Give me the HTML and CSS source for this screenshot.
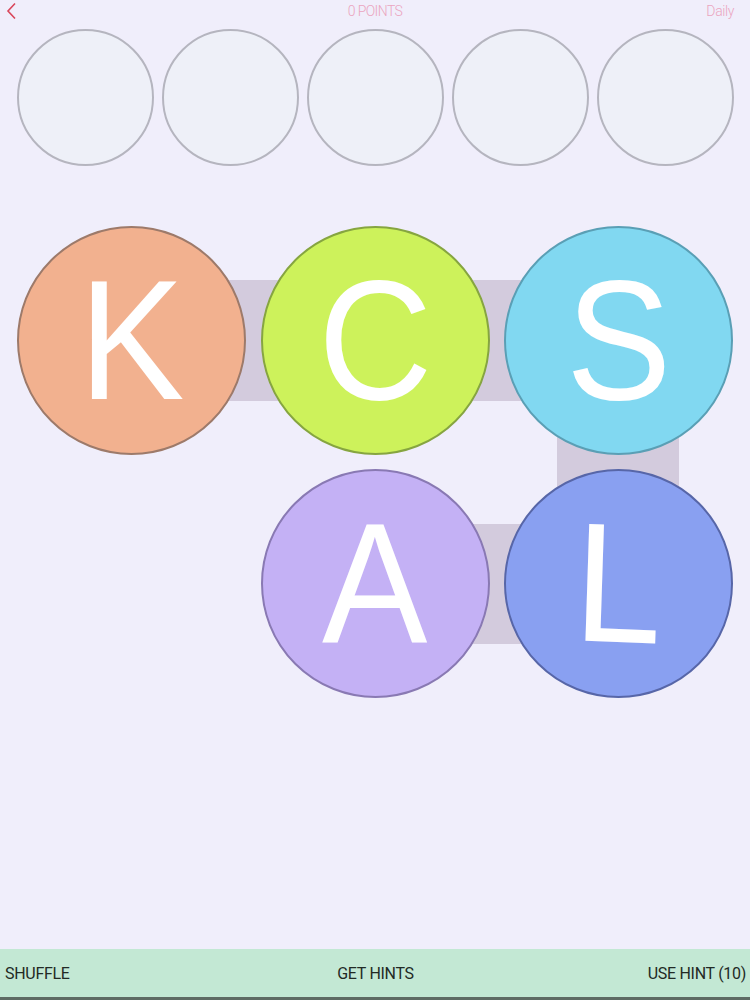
FILE: index.html
```html
<!DOCTYPE html>
<html>
<head>
<meta charset="utf-8">
<link rel="stylesheet" href="styles.css">
</head>
<body>
<div class="page">
  <header class="topbar">
    <svg class="back" width="12" height="18" viewBox="0 0 12 18"><path d="M10 1.5 L3 9 L10 16.5" fill="none" stroke="#d9465a" stroke-width="1.6"/></svg>
    <div class="points">0 POINTS</div>
    <div class="daily">Daily</div>
  </header>
  <div class="slots">
    <div class="slot"></div>
    <div class="slot"></div>
    <div class="slot"></div>
    <div class="slot"></div>
    <div class="slot"></div>
  </div>
  <div class="board">
    <div class="link link-kc"></div>
    <div class="link link-cs"></div>
    <div class="link link-sl"></div>
    <div class="link link-al"></div>
    <div class="tile tile-k"><span>K</span></div>
    <div class="tile tile-c"><span>C</span></div>
    <div class="tile tile-s"><span>S</span></div>
    <div class="tile empty"></div>
    <div class="tile tile-a"><span>A</span></div>
    <div class="tile tile-l"><span class="tilt">L</span></div>
  </div>
  <footer class="bottombar">
    <div class="btn btn-left">SHUFFLE</div>
    <div class="btn btn-mid">GET HINTS</div>
    <div class="btn btn-right">USE HINT (10)</div>
  </footer>
</div>
</body>
</html>
```

FILE: styles.css
```css
html, body {
  margin: 0;
  padding: 0;
}
body {
  background: #f0eefb;
  font-family: "Roboto", "Liberation Sans", sans-serif;
}
.page {
  height: 1000px;
  display: flex;
  flex-direction: column;
}
.topbar {
  position: relative;
  height: 29px;
  display: flex;
  align-items: flex-start;
  justify-content: space-between;
  padding: 0 16px 0 5px;
}
.back {
  margin-top: 2px;
}
.points {
  position: absolute;
  left: 0;
  right: 0;
  top: 3px;
  text-align: center;
  font-size: 14px;
  font-weight: 300;
  letter-spacing: -0.6px;
  color: #eba5c0;
}
.daily {
  margin-top: 3px;
  font-size: 14px;
  font-weight: 300;
  letter-spacing: -0.4px;
  color: #eba5c0;
}
.slots {
  display: flex;
  gap: 8px;
  padding-left: 17px;
}
.slot {
  box-sizing: border-box;
  width: 137px;
  height: 137px;
  border-radius: 50%;
  border: 2px solid #b5b5bf;
  background: #eef0f8;
}
.board {
  position: relative;
  margin-top: 60px;
  margin-left: 17px;
  display: grid;
  grid-template-columns: 229px 229px 229px;
  grid-template-rows: 229px 229px;
  column-gap: 14.5px;
  row-gap: 14px;
}
.link {
  position: absolute;
  background: #d3cbdd;
}
.link-kc {
  left: 114px;
  top: 54px;
  width: 244px;
  height: 121px;
}
.link-cs {
  left: 358px;
  top: 54px;
  width: 244px;
  height: 121px;
}
.link-sl {
  left: 540px;
  top: 114px;
  width: 122px;
  height: 244px;
}
.link-al {
  left: 358px;
  top: 298px;
  width: 244px;
  height: 120px;
}
.tile {
  position: relative;
  border-radius: 50%;
  box-sizing: border-box;
  display: flex;
  align-items: center;
  justify-content: center;
  font-family: "Liberation Sans", Arial, sans-serif;
  font-size: 170px;
  line-height: 229px;
  color: #ffffff;
}
.tile span {
  display: inline-block;
  transform: scaleX(0.93);
}
.tile.empty {
  visibility: hidden;
}
.tile span.tilt {
  transform: scaleX(0.93) rotate(2deg);
}
.tile-k {
  background: #f2b18f;
  border: 2px solid #9d7a6a;
}
.tile-c {
  background: #cdf25b;
  border: 2px solid #86a540;
}
.tile-s {
  background: #81d8f1;
  border: 2px solid #5a9fb5;
}
.tile-a {
  background: #c4b1f5;
  border: 2px solid #8979b3;
}
.tile-l {
  background: #89a0f1;
  border: 2px solid #5766a8;
}
.bottombar {
  margin-top: auto;
  height: 48px;
  background: #c3e8d4;
  border-bottom: 3px solid #5e6b64;
  display: grid;
  grid-template-columns: 1fr auto 1fr;
  align-items: center;
  padding: 0 4px 0 5px;
}
.btn {
  font-size: 16px;
  color: #222a25;
  letter-spacing: -0.3px;
}
.btn-mid {
  text-align: center;
}
.btn-right {
  text-align: right;
}
```
